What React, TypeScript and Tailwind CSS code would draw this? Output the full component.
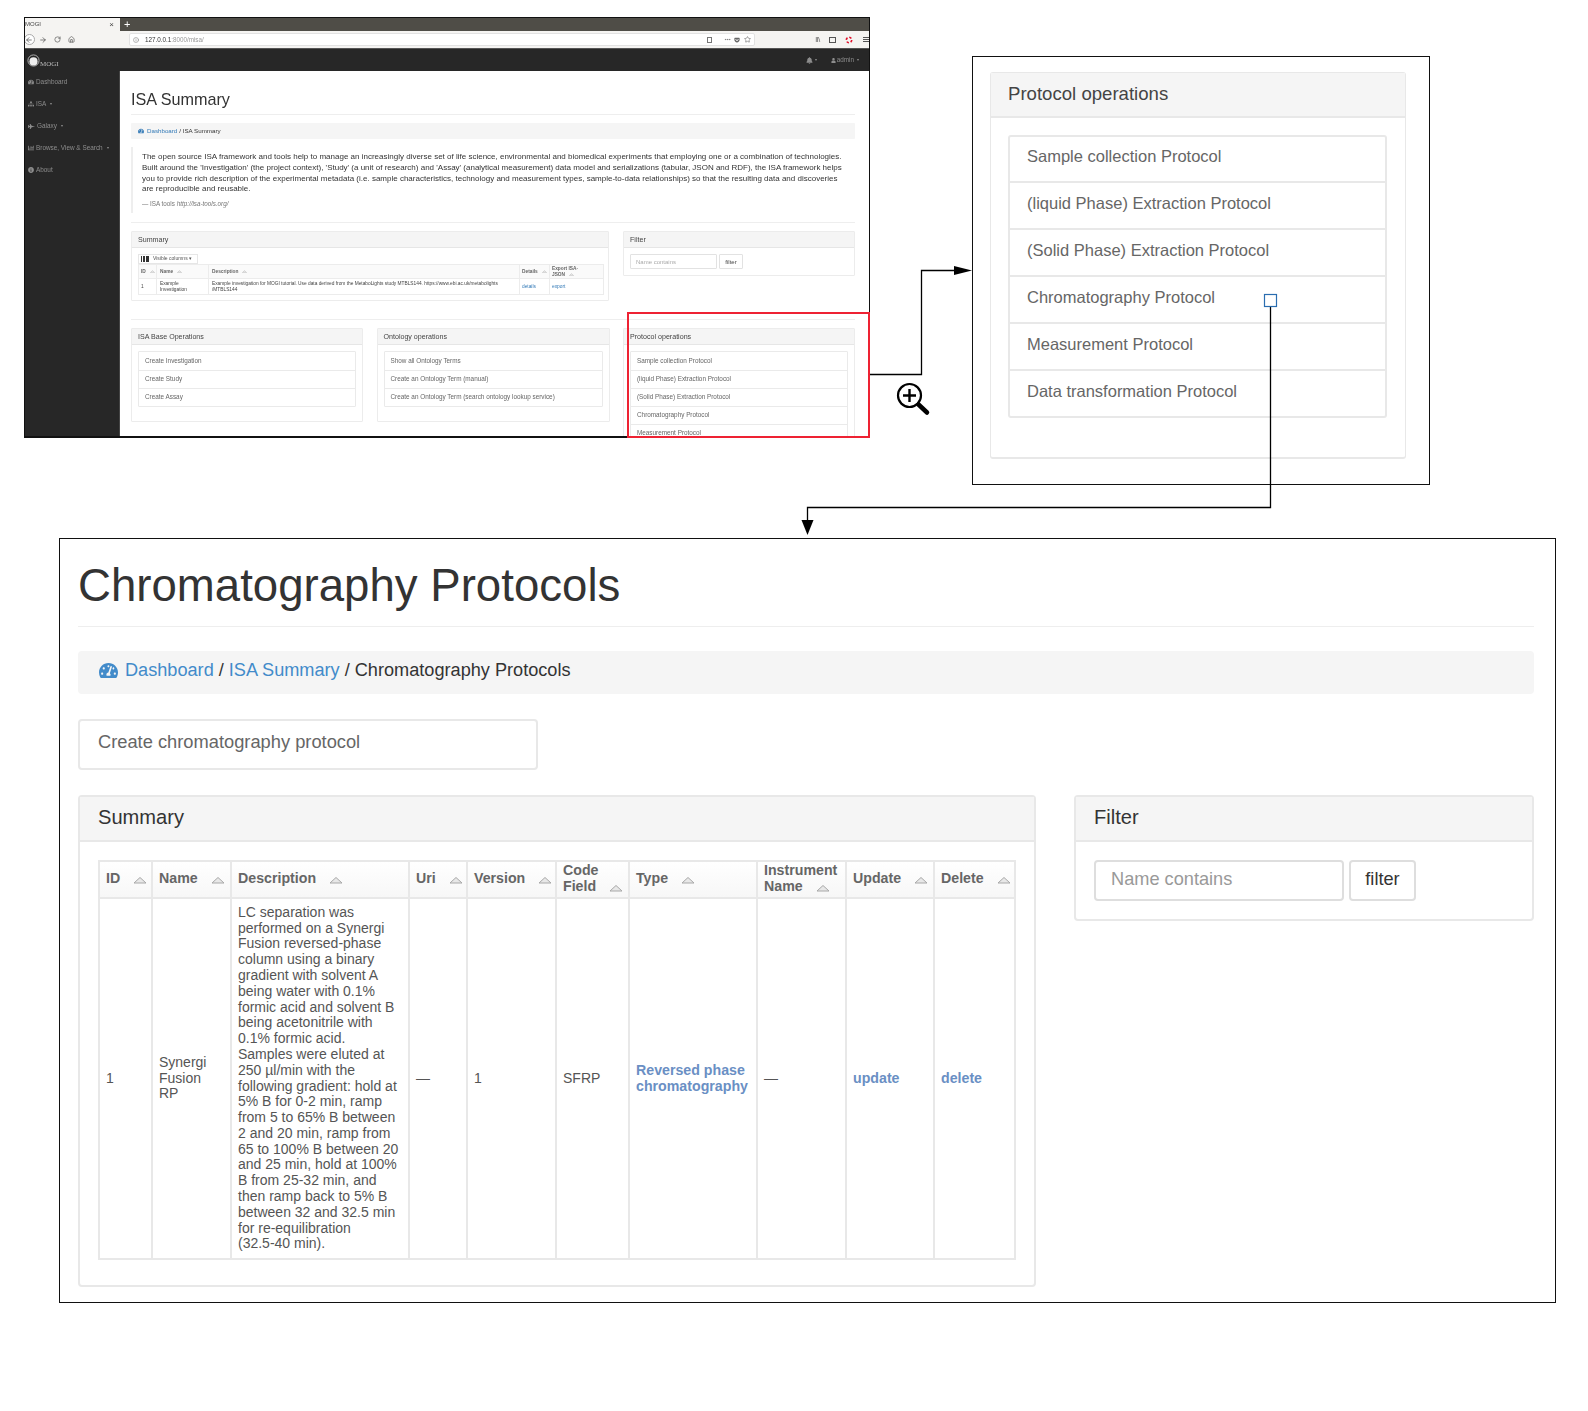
import type { ReactNode } from 'react';
import { ArrowLeft, ArrowRight, Home, Info, MoreHorizontal, RotateCw, Star } from 'lucide-react';
import { FaBell, FaChartBar, FaFighterJet, FaGetPocket, FaInfoCircle, FaSitemap, FaTachometerAlt, FaUser } from 'react-icons/fa';

const isaOps = ['Create Investigation', 'Create Study', 'Create Assay'];
const ontologyOps = [
  'Show all Ontology Terms',
  'Create an Ontology Term (manual)',
  'Create an Ontology Term (search ontology lookup service)',
];
const protocolOps = [
  'Sample collection Protocol',
  '(liquid Phase) Extraction Protocol',
  '(Solid Phase) Extraction Protocol',
  'Chromatography Protocol',
  'Measurement Protocol',
  'Data transformation Protocol',
];

const description =
  'LC separation was performed on a Synergi Fusion reversed-phase column using a binary gradient with solvent A being water with 0.1% formic acid and solvent B being acetonitrile with 0.1% formic acid. Samples were eluted at 250 µl/min with the following gradient: hold at 5% B for 0-2 min, ramp from 5 to 65% B between 2 and 20 min, ramp from 65 to 100% B between 20 and 25 min, hold at 100% B from 25-32 min, and then ramp back to 5% B between 32 and 32.5 min for re-equilibration';

function SortIcon({ small }: { small?: boolean }) {
  return (
    <svg viewBox="0 0 14 8" className={small ? 'inline-block w-[5px] h-[3px] ml-[4px]' : 'inline-block w-[14px] h-[8px] ml-[13px] align-[-1px]'}>
      <path d="M1 7 L7 1.5 L13 7 Z" fill="#e8e8e8" stroke="#a8a8a8" strokeWidth="1" />
    </svg>
  );
}

function MiniPanel({ title, className, children }: { title: string; className: string; children: ReactNode }) {
  return (
    <div className={`border border-[#ececec] rounded-[1px] bg-white ${className}`}>
      <div className="h-[16px] bg-[#f5f5f5] border-b border-[#e6e6e6] pl-[6px] text-[7.1px] leading-[16px] text-[#444]">{title}</div>
      {children}
    </div>
  );
}

function MiniList({ rows }: { rows: string[] }) {
  return (
    <div className="mt-[6px] mx-[6px] border border-[#eaeaea] rounded-[1px]">
      {rows.map((row, i) => (
        <div key={row} className={`h-[18px] pl-[6px] text-[6.37px] text-[#666] ${i ? 'border-t border-[#eaeaea] leading-[15px]' : 'leading-[17px]'}`}>
          {row}
        </div>
      ))}
    </div>
  );
}

function BrowserWindow() {
  return (
    <div className="absolute left-[24px] top-[17px] w-[846px] h-[421px] border border-[#111] border-b-2 bg-white overflow-hidden flex flex-col blur-[0.3px]">
      <div className="h-[13px] bg-[#4f4d47] flex shrink-0">
        <div className="w-[95px] bg-[#f5f4f2] flex items-center justify-between pr-[6px] text-[6px] text-[#444]">
          <span>MOGI</span>
          <span className="text-[8px] leading-none">×</span>
        </div>
        <span className="ml-[4px] text-white text-[11px] leading-[13px]">+</span>
      </div>
      <div className="h-[17px] bg-[#f5f4f2] flex items-center shrink-0 text-[#444]">
        <span className="w-[11px] h-[11px] -ml-[1px] border border-[#aaa] rounded-full bg-white flex items-center justify-center">
          <ArrowLeft size={8} />
        </span>
        <ArrowRight size={8} className="ml-[4px]" />
        <RotateCw size={7} className="ml-[7px]" />
        <Home size={7} className="ml-[7px]" />
        <div className="ml-[54px] w-[627px] h-[13px] bg-white border border-[#e2e2e2] rounded-[2px] flex items-center text-[6.3px] pl-[3px]">
          <Info size={6} className="text-[#777]" />
          <span className="ml-[6px] text-[#333]">127.0.0.1</span>
          <span className="text-[#999]">:8000/misa/</span>
          <span className="ml-auto w-[5px] h-[6px] border border-[#777]" />
          <MoreHorizontal size={7} className="ml-[12px] text-[#666]" />
          <FaGetPocket size={6} className="ml-[3px] text-[#666]" />
          <Star size={7} className="ml-[4px] mr-[3px] text-[#666]" />
        </div>
        <div className="ml-[60px] flex items-center gap-[9px]">
          <span className="text-[7px] leading-none text-[#555] tracking-tighter">II\</span>
          <span className="w-[7px] h-[6px] border border-[#555]" />
          <svg viewBox="0 0 10 10" className="w-[8px] h-[8px]">
            <circle cx="5" cy="5" r="3.4" fill="none" stroke="#e0112b" strokeWidth="2" strokeDasharray="3 2.3" />
          </svg>
          <span className="ml-[1px] w-[6px] h-[5px] border-y border-[#555] flex items-center">
            <span className="w-full h-[1px] bg-[#555]" />
          </span>
        </div>
      </div>
      <div className="h-[23px] bg-[#272727] border-t border-[#555] flex items-center shrink-0 pl-[2px] pr-[10px] text-[#8d8d8d] text-[6.3px]">
        <svg viewBox="0 0 14 14" className="w-[13px] h-[13px]">
          <circle cx="7" cy="7" r="6" fill="none" stroke="#ddd" strokeWidth="0.8" />
          <circle cx="7" cy="8" r="4.4" fill="#eee" />
        </svg>
        <span className="font-['Liberation_Serif',serif] text-[7px] text-[#bbb] mt-[8px]">MOGI</span>
        <FaBell size={7} className="ml-auto" />
        <span className="ml-[2px] text-[4px]">▾</span>
        <FaUser size={5} className="ml-[14px]" />
        <span className="ml-[1px]">admin</span>
        <span className="ml-[3px] text-[4px]">▾</span>
      </div>
      <div className="flex flex-1 min-h-0">
        <div className="w-[95px] shrink-0 bg-[#272727] border-r border-[#444] text-[#8d8d8d] text-[6.4px] pl-[3px] pt-[5px] flex flex-col">
          <div className="h-[22px] flex items-center gap-[2px] pb-[10px]"><FaTachometerAlt size={6} />Dashboard</div>
          <div className="h-[22px] flex items-center gap-[2px] pb-[10px]"><FaSitemap size={6} />ISA<span className="ml-[2px] text-[4px]">▾</span></div>
          <div className="h-[22px] flex items-center gap-[2px] pb-[10px]"><FaFighterJet size={7} />Galaxy<span className="ml-[2px] text-[4px]">▾</span></div>
          <div className="h-[22px] flex items-center gap-[2px] pb-[10px]"><FaChartBar size={6} />Browse, View &amp; Search<span className="ml-[2px] text-[4px]">▾</span></div>
          <div className="h-[22px] flex items-center gap-[2px] pb-[10px]"><FaInfoCircle size={6} />About</div>
        </div>
        <div className="w-[724px] ml-[11px] min-w-0">
          <div className="mt-[16px] h-[24px] text-[16.2px] leading-[24px] text-[#333]">ISA Summary</div>
          <div className="mt-[3px] h-[1px] bg-[#eeeeee]" />
          <div className="mt-[8px] h-[16px] bg-[#f5f5f5] rounded-[1px] pl-[7px] pb-[1px] flex items-center text-[6.2px] text-[#333]">
            <FaTachometerAlt size={6} className="text-[#337ab7]" />
            <span className="ml-[3px] text-[#337ab7]">Dashboard</span>
            <span className="ml-[2px]">/ ISA Summary</span>
          </div>
          <div className="mt-[8px] h-[66px] border-l-2 border-[#eeeeee] pl-[9px] pt-[5px] text-[8px] leading-[10.8px] text-[#333]">
            <p className="w-[705px]">
              The open source ISA framework and tools help to manage an increasingly diverse set of life science, environmental and biomedical experiments that employing one or a combination of technologies. Built around the 'Investigation' (the project context), 'Study' (a unit of research) and 'Assay' (analytical measurement) data model and serializations (tabular, JSON and RDF), the ISA framework helps you to provide rich description of the experimental metadata (i.e. sample characteristics, technology and measurement types, sample-to-data relationships) so that the resulting data and discoveries are reproducible and reusable.
            </p>
            <p className="mt-[4px] text-[6.3px] text-[#777]">— ISA tools <em>http://isa-tools.org/</em></p>
          </div>
          <div className="mt-[9px] h-[1px] bg-[#eeeeee]" />
          <div className="mt-[8px] flex justify-between items-start">
            <MiniPanel title="Summary" className="w-[478px] h-[70px]">
              <div className="mx-[6px] mt-[6px]">
                <div className="w-[60px] h-[10px] border border-[#e6e6e6] flex items-center text-[5px] text-[#555]">
                  <span className="ml-[2px] w-[8px] h-[6px] bg-[#333] flex gap-[1px] px-[1px]">
                    <span className="w-[1px] bg-white" />
                    <span className="ml-[1px] w-[1px] bg-white" />
                  </span>
                  <span className="ml-[4px]">Visible columns ▾</span>
                </div>
                <table className="w-[465px] table-fixed border-collapse text-[4.8px] leading-[5.6px] text-[#444]">
                  <colgroup>
                    <col className="w-[18px]" />
                    <col className="w-[52px]" />
                    <col className="w-[311px]" />
                    <col className="w-[30px]" />
                    <col className="w-[54px]" />
                  </colgroup>
                  <thead>
                    <tr className="h-[14px] bg-[#fafafa] font-bold text-[#666]">
                      <td className="border border-[#ececec] pl-[2px]">ID<SortIcon small /></td>
                      <td className="border border-[#ececec] pl-[3px]">Name<SortIcon small /></td>
                      <td className="border border-[#ececec] pl-[3px]">Description<SortIcon small /></td>
                      <td className="border border-[#ececec] pl-[2px]">Details<SortIcon small /></td>
                      <td className="border border-[#ececec] pl-[2px]">Export ISA-<br />JSON<SortIcon small /></td>
                    </tr>
                  </thead>
                  <tbody>
                    <tr className="h-[16px]">
                      <td className="border border-[#ececec] pl-[2px]">1</td>
                      <td className="border border-[#ececec] pl-[3px]">Example<br />Investigation</td>
                      <td className="border border-[#ececec] pl-[3px]">Example investigation for MOGI tutorial. Use data derived from the MetaboLights study MTBLS144. https://www.ebi.ac.uk/metabolights<br />/MTBLS144</td>
                      <td className="border border-[#ececec] pl-[2px] text-[#337ab7]">details</td>
                      <td className="border border-[#ececec] pl-[2px] text-[#337ab7]">export</td>
                    </tr>
                  </tbody>
                </table>
              </div>
            </MiniPanel>
            <MiniPanel title="Filter" className="w-[232px] h-[45px]">
              <div className="mx-[6px] mt-[6px] flex gap-[2px]">
                <div className="w-[87px] h-[15px] border border-[#e2e2e2] rounded-[1px] pl-[5px] text-[6px] leading-[14px] text-[#aaa]">Name contains</div>
                <div className="w-[24px] h-[15px] border border-[#e2e2e2] rounded-[1px] text-center text-[6px] leading-[14px] text-[#444]">filter</div>
              </div>
            </MiniPanel>
          </div>
          <div className="mt-[18px] h-[1px] bg-[#eeeeee]" />
          <div className="mt-[8px] flex justify-between items-start">
            <MiniPanel title="ISA Base Operations" className="w-[232px] h-[94px]"><MiniList rows={isaOps} /></MiniPanel>
            <MiniPanel title="Ontology operations" className="w-[233px] h-[94px]"><MiniList rows={ontologyOps} /></MiniPanel>
            <MiniPanel title="Protocol operations" className="w-[232px] h-[132px]"><MiniList rows={protocolOps} /></MiniPanel>
          </div>
        </div>
      </div>
    </div>
  );
}

function ProtocolBox() {
  return (
    <div className="absolute left-[972px] top-[56px] w-[458px] h-[429px] border border-[#111] bg-white pl-[17px] pt-[15px]">
      <div className="w-[416px] h-[387px] border border-[#e8e8e8] border-b-2 rounded-[3px]">
        <div className="h-[45px] bg-[#f5f5f5] border-b-2 border-[#e8e8e8] pl-[17px] text-[18.6px] leading-[41px] text-[#444]">Protocol operations</div>
        <div className="mt-[17px] ml-[17px] w-[379px] border-2 border-[#e8e8e8] rounded-[3px]">
          {protocolOps.map((row, i) => (
            <div
              key={row}
              className={`pl-[17px] text-[16.5px] text-[#666] ${i ? 'h-[47px] border-t-2 border-[#e8e8e8] leading-[41px]' : 'h-[44px] leading-[38px]'}`}
            >
              {row}
            </div>
          ))}
        </div>
      </div>
    </div>
  );
}

const thClass = 'border-2 border-[#e8e8e8] pl-[6px] pr-[2px] pb-[3px] align-middle text-left font-bold text-[14.2px] text-[#666] leading-[16px] bg-gradient-to-b from-white to-[#f7f7f7]';
const tdClass = 'border-2 border-[#e8e8e8] pl-[6px] pr-[2px] align-middle text-[#555]';

function DetailBox() {
  return (
    <div className="absolute left-[59px] top-[538px] w-[1497px] h-[765px] border border-[#111] bg-white pl-[18px]">
      <h1 className="mt-[21px] h-[52px] text-[45.6px] leading-[52px] text-[#333]">Chromatography Protocols</h1>
      <div className="mt-[14px] w-[1456px] h-[1px] bg-[#eeeeee]" />
      <div className="mt-[24px] w-[1456px] h-[43px] bg-[#f5f5f5] rounded-[4px] pl-[21px] pb-[4px] flex items-center text-[18.15px] text-[#333]">
        <FaTachometerAlt size={19} className="text-[#428bca]" />
        <span className="ml-[7px] text-[#428bca]">Dashboard</span>
        <span className="ml-[5px]">/</span>
        <span className="ml-[5px] text-[#428bca]">ISA Summary</span>
        <span className="ml-[5px]">/ Chromatography Protocols</span>
      </div>
      <div className="mt-[25px] w-[460px] h-[51px] border-2 border-[#e8e8e8] rounded-[4px] pl-[18px] text-[18.3px] leading-[42px] text-[#666]">
        Create chromatography protocol
      </div>
      <div className="mt-[25px] w-[1456px] flex justify-between items-start">
        <div className="w-[958px] h-[492px] border-2 border-[#e8e8e8] rounded-[4px]">
          <div className="h-[45px] bg-[#f5f5f5] border-b-2 border-[#e8e8e8] pl-[18px] text-[20.1px] leading-[40px] text-[#333]">Summary</div>
          <div className="pt-[18px] pl-[18px]">
            <table className="w-[916px] h-[400px] table-fixed border-collapse text-[14px] leading-[15.8px]">
              <colgroup>
                <col className="w-[53px]" />
                <col className="w-[79px]" />
                <col className="w-[178px]" />
                <col className="w-[58px]" />
                <col className="w-[89px]" />
                <col className="w-[73px]" />
                <col className="w-[128px]" />
                <col className="w-[89px]" />
                <col className="w-[88px]" />
                <col className="w-[81px]" />
              </colgroup>
              <thead>
                <tr className="h-[37px]">
                  <th className={thClass}>ID<SortIcon /></th>
                  <th className={thClass}>Name<SortIcon /></th>
                  <th className={thClass}>Description<SortIcon /></th>
                  <th className={thClass}>Uri<SortIcon /></th>
                  <th className={thClass}>Version<SortIcon /></th>
                  <th className={thClass}>Code<br />Field<SortIcon /></th>
                  <th className={thClass}>Type<SortIcon /></th>
                  <th className={thClass}>Instrument<br />Name<SortIcon /></th>
                  <th className={thClass}>Update<SortIcon /></th>
                  <th className={thClass}>Delete<SortIcon /></th>
                </tr>
              </thead>
              <tbody>
                <tr>
                  <td className={tdClass}>1</td>
                  <td className={tdClass}>Synergi<br />Fusion<br />RP</td>
                  <td className={`${tdClass} !pr-[7px]`}>{description}<br />(32.5-40 min).</td>
                  <td className={tdClass}>—</td>
                  <td className={tdClass}>1</td>
                  <td className={tdClass}>SFRP</td>
                  <td className={`${tdClass} font-bold text-[14.2px] !text-[#6a8fc4]`}>Reversed phase<br />chromatography</td>
                  <td className={tdClass}>—</td>
                  <td className={`${tdClass} font-bold text-[14.2px] !text-[#6a8fc4]`}>update</td>
                  <td className={`${tdClass} font-bold text-[14.2px] !text-[#6a8fc4]`}>delete</td>
                </tr>
              </tbody>
            </table>
          </div>
        </div>
        <div className="w-[460px] h-[126px] border-2 border-[#e8e8e8] rounded-[4px]">
          <div className="h-[45px] bg-[#f5f5f5] border-b-2 border-[#e8e8e8] pl-[18px] text-[20.1px] leading-[40px] text-[#333]">Filter</div>
          <div className="mt-[18px] ml-[18px] flex gap-[5px]">
            <div className="w-[250px] h-[41px] border-2 border-[#dedede] rounded-[4px] pl-[15px] text-[18.2px] leading-[35px] text-[#999]">Name contains</div>
            <div className="w-[67px] h-[41px] border-2 border-[#dedede] rounded-[4px] text-center text-[18.2px] leading-[35px] text-[#333]">filter</div>
          </div>
        </div>
      </div>
    </div>
  );
}

function Connectors() {
  return (
    <svg className="absolute left-0 top-0 w-[1588px] h-[1411px] pointer-events-none" viewBox="0 0 1588 1411">
      <path d="M870 374.5 H921.5 V270.5 H955" fill="none" stroke="#000" strokeWidth="1.3" />
      <path d="M972 270.5 L954 266 V275 Z" fill="#000" />
      <path d="M1270.5 307 V507.5 H807.5 V522" fill="none" stroke="#000" strokeWidth="1.3" />
      <path d="M807.5 535 L801.5 520 H813.5 Z" fill="#000" />
      <rect x="1264.5" y="294.5" width="12" height="12" fill="#fff" stroke="#2a6db0" strokeWidth="1.2" />
      <circle cx="909.5" cy="395.5" r="11.5" fill="#fff" stroke="#000" strokeWidth="2.2" />
      <path d="M903 395.5 H916 M909.5 389 V402" stroke="#000" strokeWidth="2.4" />
      <path d="M918.5 404.5 L927 412.5" stroke="#000" strokeWidth="4.5" strokeLinecap="round" />
    </svg>
  );
}

export default function App() {
  return (
    <div className="relative w-[1588px] h-[1411px] bg-white overflow-hidden font-['Liberation_Sans',sans-serif]">
      <BrowserWindow />
      <div className="absolute left-[627px] top-[312px] w-[243px] h-[126px] border-[2px] border-[#ee2233]" />
      <ProtocolBox />
      <DetailBox />
      <Connectors />
    </div>
  );
}
